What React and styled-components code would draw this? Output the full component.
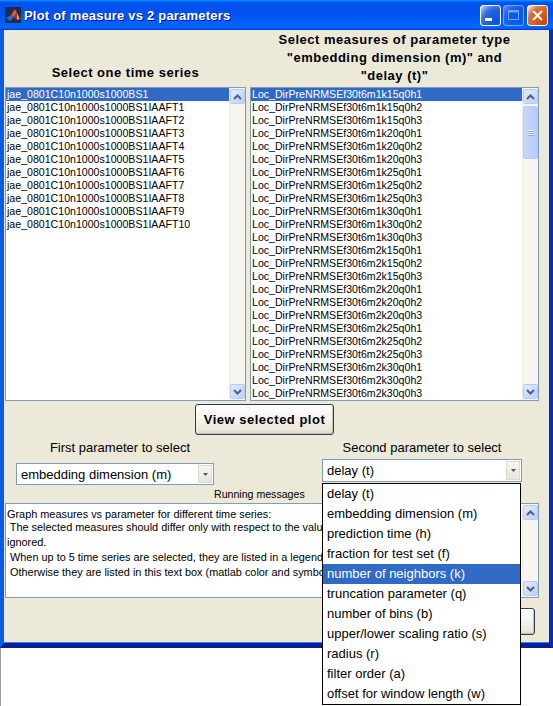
import React from "react";
import styled, { createGlobalStyle } from "styled-components";

const GlobalStyle = createGlobalStyle`
  html, body {
    margin: 0;
    padding: 0;
    background: #fff;
  }
  body {
    font-family: "Liberation Sans", Arial, sans-serif;
  }
`;

const timeSeries = [
  "jae_0801C10n1000s1000BS1",
  "jae_0801C10n1000s1000BS1IAAFT1",
  "jae_0801C10n1000s1000BS1IAAFT2",
  "jae_0801C10n1000s1000BS1IAAFT3",
  "jae_0801C10n1000s1000BS1IAAFT4",
  "jae_0801C10n1000s1000BS1IAAFT5",
  "jae_0801C10n1000s1000BS1IAAFT6",
  "jae_0801C10n1000s1000BS1IAAFT7",
  "jae_0801C10n1000s1000BS1IAAFT8",
  "jae_0801C10n1000s1000BS1IAAFT9",
  "jae_0801C10n1000s1000BS1IAAFT10",
];

const measures = [];
["m1", "m2"].forEach((m) =>
  ["k15", "k20", "k25", "k30"].forEach((k) =>
    ["h1", "h2", "h3"].forEach((h) =>
      measures.push(`Loc_DirPreNRMSEf30t6${m}${k}q0${h}`)
    )
  )
);

const params = [
  "delay (t)",
  "embedding dimension (m)",
  "prediction time (h)",
  "fraction for test set (f)",
  "number of neighbors (k)",
  "truncation parameter (q)",
  "number of bins (b)",
  "upper/lower scaling ratio (s)",
  "radius (r)",
  "filter order (a)",
  "offset for window length (w)",
];

const messages = [
  "Graph measures vs parameter for different time series:",
  " The selected measures should differ only with respect to the values of the two parameters, the rest is",
  "ignored.",
  " When up to 5 time series are selected, they are listed in a legend.",
  " Otherwise they are listed in this text box (matlab color and symbol).",
];

const Screen = styled.div`
  width: 553px;
  height: 706px;
  overflow: hidden;
  background: linear-gradient(to right, #9c9c9c 0 1px, #fff 1px);
`;

const Window = styled.div`
  width: 553px;
  display: flex;
  flex-direction: column;
`;

const TitleBar = styled.div`
  height: 30px;
  display: flex;
  align-items: center;
  padding: 0 5px;
  box-sizing: border-box;
  background: linear-gradient(
    180deg,
    #0997ff,
    #0053ee 8%,
    #0050ee 40%,
    #0066ff 88%,
    #0066ff 93%,
    #005bff 95%,
    #003dd7 96%,
    #003dd7
  );
`;

const TitleText = styled.span`
  flex: 1;
  margin-left: 3px;
  color: #fff;
  font-weight: bold;
  font-size: 13px;
  letter-spacing: 0.2px;
  text-shadow: 1px 1px #0f1089;
`;

const CapButton = styled.div`
  width: 21px;
  height: 21px;
  box-sizing: border-box;
  margin-left: ${(p) => p.$gap || 0}px;
  border: 1px solid #fff;
  border-radius: 3px;
  display: flex;
  align-items: center;
  justify-content: center;
  opacity: ${(p) => (p.$disabled ? 0.45 : 1)};
  background: ${(p) =>
    p.$close
      ? "radial-gradient(circle at 90% 90%, #cc4600 0%, #dc6527 55%, #cd7546 70%, #ffccb2 90%, #fff 100%)"
      : "radial-gradient(circle at 90% 90%, #0054e9 0%, #2263d5 55%, #4479e4 70%, #a3bbec 90%, #fff 100%)"};
`;

const Client = styled.div`
  height: 613px;
  background: #ece9d8;
  border-left: 4px solid #0a5ce6;
  border-right: 4px solid #0a2db0;
  border-bottom: 5px solid #0a1f95;
  box-shadow: inset 0 -1px #3a7ef0;
  display: flex;
  flex-direction: column;
`;

const TopGrid = styled.div`
  display: grid;
  grid-template-columns: 241px 289px;
  grid-template-rows: 57px 314px;
  column-gap: 4px;
  margin-left: 1px;
`;

const Heading = styled.div`
  align-self: end;
  padding-bottom: ${(p) => p.$pb}px;
  text-align: center;
  font-weight: bold;
  font-size: 13px;
  letter-spacing: 0.5px;
  line-height: 18px;
  color: #000;
`;

const ListBox = styled.div`
  display: flex;
  background: #fff;
  border: 1px solid #7f9db9;
  box-sizing: border-box;
  overflow: hidden;
`;

const Items = styled.div`
  flex: 1;
  min-width: 0;
  overflow: hidden;
`;

const Item = styled.div`
  height: 13px;
  line-height: 13px;
  font-size: 10.6px;
  padding-left: 1px;
  white-space: nowrap;
  color: ${(p) => (p.$sel ? "#fff" : "#000")};
  background: ${(p) => (p.$sel ? "#316ac5" : "transparent")};
`;

const Track = styled.div`
  width: 16px;
  flex: none;
  display: flex;
  flex-direction: column;
  align-items: center;
  padding: 1px 0;
  box-sizing: border-box;
  background: #f6f5f0;
  border-left: 1px solid #eeede7;
`;

const ArrowButton = styled.div`
  width: 15px;
  height: 15px;
  flex: none;
  box-sizing: border-box;
  border: 1px solid #b7cbf5;
  border-radius: 2px;
  background: linear-gradient(135deg, #e2ebfe, #bacff9);
  display: flex;
  align-items: center;
  justify-content: center;
`;

const Thumb = styled.div`
  width: 15px;
  height: ${(p) => p.$h}px;
  margin-top: ${(p) => p.$top}px;
  flex: none;
  box-sizing: border-box;
  border: 1px solid #b7cbf5;
  border-radius: 2px;
  background: linear-gradient(90deg, #c7d7fc, #b6cbf8);
  display: flex;
  flex-direction: column;
  align-items: center;
  justify-content: center;
  gap: 1px;
`;

const Grip = styled.div`
  width: 6px;
  height: 1px;
  background: #eef3fe;
  box-shadow: 0 1px #8ca6de;
`;

const Spacer = styled.div`
  flex: 1;
`;

const ButtonRow = styled.div`
  display: flex;
  margin-top: 3px;
  padding-left: 191px;
`;

const PushButton = styled.div`
  width: ${(p) => p.$w}px;
  height: ${(p) => p.$h}px;
  box-sizing: border-box;
  border: 1px solid #2d3b53;
  border-radius: 3px;
  background: linear-gradient(180deg, #fff 0%, #f6f5f0 40%, #ebe8dc 85%, #d8d3c5 100%);
  box-shadow: inset -1px -1px #c9c4b4;
  display: flex;
  align-items: center;
  justify-content: center;
  font-weight: bold;
  font-size: 13px;
  letter-spacing: 0.5px;
  color: #000;
`;

const ParamGrid = styled.div`
  display: grid;
  grid-template-columns: 198px 200px;
  column-gap: 108px;
  margin-left: 12px;
  margin-top: 5px;
`;

const ParamColumn = styled.div`
  display: flex;
  flex-direction: column;
  align-items: stretch;
`;

const Label = styled.div`
  text-align: center;
  font-size: 13px;
  line-height: 15px;
  color: #000;
  margin-left: ${(p) => p.$shift || 0}px;
`;

const PopupWrap = styled.div`
  position: relative;
  margin-top: ${(p) => p.$mt}px;
`;

const Popup = styled.div`
  height: ${(p) => p.$h}px;
  display: flex;
  align-items: stretch;
  box-sizing: border-box;
  background: #fff;
  border: 1px solid #7f9db9;
`;

const PopupText = styled.div`
  flex: 1;
  padding-left: 4px;
  display: flex;
  align-items: center;
  font-size: 13px;
  color: #000;
`;

const PopupArrow = styled.div`
  width: 14px;
  margin: 1px;
  box-sizing: border-box;
  background: linear-gradient(180deg, #f7f6f3, #e7e5de);
  border: 1px solid #dcdad2;
  display: flex;
  align-items: center;
  justify-content: center;
`;

const DropList = styled.div`
  position: absolute;
  top: 100%;
  left: 0;
  width: 199px;
  margin-top: 1px;
  box-sizing: border-box;
  background: #fff;
  border: 1px solid #000;
  z-index: 5;
`;

const DropItem = styled.div`
  height: 20px;
  line-height: 20px;
  padding-left: 4px;
  font-size: 13px;
  white-space: nowrap;
  color: ${(p) => (p.$sel ? "#fff" : "#000")};
  background: ${(p) => (p.$sel ? "#316ac5" : "#fff")};
`;

const SmallLabel = styled.div`
  margin-top: 3px;
  padding-left: 210px;
  font-size: 10.6px;
  line-height: 13px;
  color: #000;
`;

const MessageBox = styled.div`
  margin: 2px 0 0 1px;
  width: 534px;
  height: 95px;
  display: flex;
  box-sizing: border-box;
  background: #fff;
  border: 1px solid #7f9db9;
`;

const MessageText = styled.div`
  flex: 1;
  min-width: 0;
  overflow: hidden;
  padding: 4px 0 0 1px;
`;

const MessageLine = styled.div`
  font-size: 10.9px;
  line-height: ${(p) => p.$lh}px;
  white-space: pre;
  color: #000;
`;

const BottomRow = styled.div`
  display: flex;
  justify-content: flex-end;
  margin-top: 10px;
  padding-right: 14px;
`;

function Chevron({ up }) {
  return (
    <svg width="9" height="6" viewBox="0 0 9 6">
      <polyline
        points={up ? "1,5 4.5,1.5 8,5" : "1,1 4.5,4.5 8,1"}
        fill="none"
        stroke="#4d6185"
        strokeWidth="2"
      />
    </svg>
  );
}

function ScrollBar({ thumb }) {
  return (
    <Track>
      <ArrowButton>
        <Chevron up />
      </ArrowButton>
      {thumb && (
        <Thumb $top={thumb.top} $h={thumb.h}>
          <Grip />
          <Grip />
          <Grip />
        </Thumb>
      )}
      <Spacer />
      <ArrowButton>
        <Chevron />
      </ArrowButton>
    </Track>
  );
}

function MatlabIcon() {
  return (
    <svg width="16" height="16" viewBox="0 0 16 16">
      <rect x="0" y="0" width="16" height="16" fill="#1b2a57" />
      <polygon points="1,11 6,8 9,10 5,14" fill="#2f6fb0" />
      <polygon points="6,8 10,2 12,6 9,10" fill="#e2581b" />
      <polygon points="10,2 15,12 12,13 12,6" fill="#f49c2a" />
      <polygon points="9,10 12,6 12,13" fill="#b8360f" />
    </svg>
  );
}

function DropArrow() {
  return (
    <svg width="5" height="3" viewBox="0 0 5 3">
      <polygon points="0,0 5,0 2.5,3" fill="#555" />
    </svg>
  );
}

export default function App() {
  return (
    <Screen>
      <GlobalStyle />
      <Window>
        <TitleBar>
          <MatlabIcon />
          <TitleText>Plot of measure vs 2 parameters</TitleText>
          <CapButton>
            <svg width="19" height="19" viewBox="0 0 19 19">
              <rect x="4" y="12" width="7" height="3" fill="#fff" />
            </svg>
          </CapButton>
          <CapButton $gap={2} $disabled>
            <svg width="19" height="19" viewBox="0 0 19 19">
              <rect x="4.5" y="4.5" width="10" height="9" fill="none" stroke="#fff" strokeWidth="1" />
              <rect x="4.5" y="4.5" width="10" height="2" fill="#fff" />
            </svg>
          </CapButton>
          <CapButton $gap={3} $close>
            <svg width="19" height="19" viewBox="0 0 19 19">
              <path d="M5 5 L14 14 M14 5 L5 14" stroke="#fff" strokeWidth="2" />
            </svg>
          </CapButton>
        </TitleBar>

        <Client>
          <TopGrid>
            <Heading $pb={5}>Select one time series</Heading>
            <Heading $pb={2}>
              Select measures of parameter type
              <br />
              "embedding dimension (m)" and
              <br />
              "delay (t)"
            </Heading>
            <ListBox>
              <Items>
                {timeSeries.map((t, i) => (
                  <Item key={t} $sel={i === 0}>
                    {t}
                  </Item>
                ))}
              </Items>
              <ScrollBar />
            </ListBox>
            <ListBox>
              <Items>
                {measures.map((m, i) => (
                  <Item key={m} $sel={i === 0}>
                    {m}
                  </Item>
                ))}
              </Items>
              <ScrollBar thumb={{ top: 2, h: 53 }} />
            </ListBox>
          </TopGrid>

          <ButtonRow>
            <PushButton $w={139} $h={31}>View selected plot</PushButton>
          </ButtonRow>

          <ParamGrid>
            <ParamColumn>
              <Label $shift={10}>First parameter to select</Label>
              <PopupWrap $mt={8}>
                <Popup $h={22}>
                  <PopupText>embedding dimension (m)</PopupText>
                  <PopupArrow>
                    <DropArrow />
                  </PopupArrow>
                </Popup>
              </PopupWrap>
            </ParamColumn>
            <ParamColumn>
              <Label>Second parameter to select</Label>
              <PopupWrap $mt={4}>
                <Popup $h={23}>
                  <PopupText>delay (t)</PopupText>
                  <PopupArrow>
                    <DropArrow />
                  </PopupArrow>
                </Popup>
                <DropList>
                  {params.map((p, i) => (
                    <DropItem key={p} $sel={i === 4}>
                      {p}
                    </DropItem>
                  ))}
                </DropList>
              </PopupWrap>
            </ParamColumn>
          </ParamGrid>

          <SmallLabel>Running messages</SmallLabel>

          <MessageBox>
            <MessageText>
              {messages.map((m, i) => (
                <MessageLine key={i} $lh={i === 0 ? 12 : 15}>
                  {m}
                </MessageLine>
              ))}
            </MessageText>
            <ScrollBar />
          </MessageBox>

          <BottomRow>
            <PushButton $w={120} $h={27} />
          </BottomRow>
        </Client>
      </Window>
    </Screen>
  );
}
